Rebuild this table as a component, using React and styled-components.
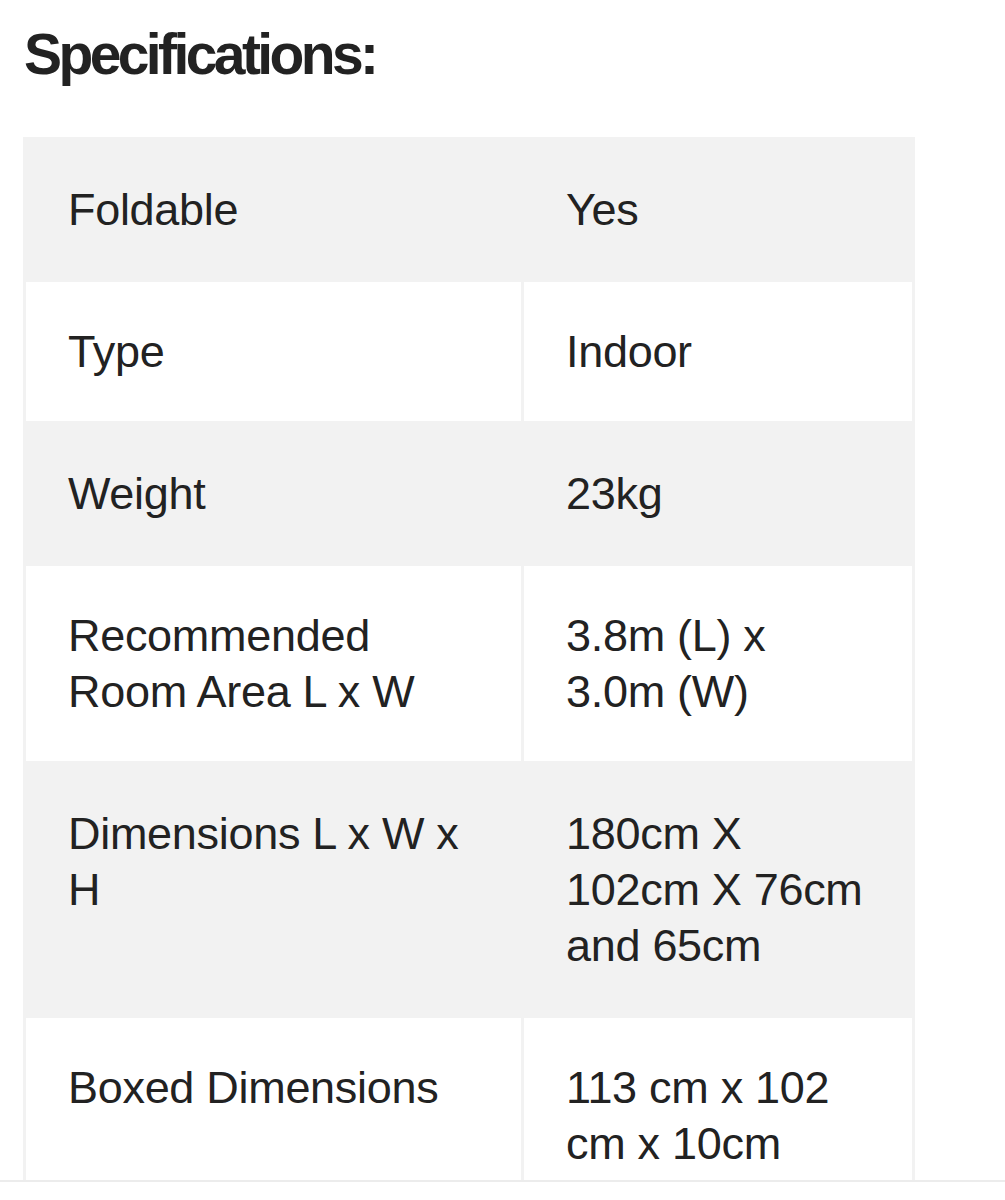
import styled, { createGlobalStyle } from 'styled-components';

const GlobalStyle = createGlobalStyle`
  html, body {
    margin: 0;
    padding: 0;
    background: #fff;
  }
  body {
    font-family: 'Liberation Sans', Arial, Helvetica, sans-serif;
    color: #222;
  }
`;

// the screenshot is cut off mid-row, so the page is clipped with a thin rule
const Page = styled.div`
  height: 1180px;
  overflow: hidden;
  border-bottom: 2px solid #ececec;
  padding: 0 23px;
`;

const Heading = styled.h2`
  margin: 22px 0 0 1px;
  font-size: 57px;
  line-height: 65px;
  font-weight: 700;
  letter-spacing: -3.6px;
  color: #222;
`;

const SpecTable = styled.table`
  margin-top: 50px;
  width: 892px;
  border-collapse: separate;
  border-spacing: 3px;
  background: #f2f2f2;
  table-layout: fixed;
`;

const Row = styled.tr`
  background: ${({ $shaded }) => ($shaded ? '#f2f2f2' : '#fff')};
`;

const Cell = styled.td`
  box-sizing: border-box;
  padding: 42px 40px 41px 42px;
  font-size: 45px;
  line-height: 56px;
  vertical-align: top;
  color: #222;
  letter-spacing: -0.3px;
`;

const specs = [
  ['Foldable', 'Yes'],
  ['Type', 'Indoor'],
  ['Weight', '23kg'],
  ['Recommended Room Area L x W', '3.8m (L) x 3.0m (W)'],
  ['Dimensions L x W x H', '180cm X 102cm X 76cm and 65cm'],
  ['Boxed Dimensions', '113 cm x 102 cm x 10cm'],
];

export default function App() {
  return (
    <>
      <GlobalStyle />
      <Page>
        <Heading>Specifications:</Heading>
        <SpecTable>
          <colgroup>
            <col style={{ width: 495 }} />
            <col style={{ width: 388 }} />
          </colgroup>
          <tbody>
            {specs.map(([label, value], idx) => (
              <Row key={label} $shaded={idx % 2 === 0}>
                <Cell>{label}</Cell>
                <Cell>{value}</Cell>
              </Row>
            ))}
          </tbody>
        </SpecTable>
      </Page>
    </>
  );
}
